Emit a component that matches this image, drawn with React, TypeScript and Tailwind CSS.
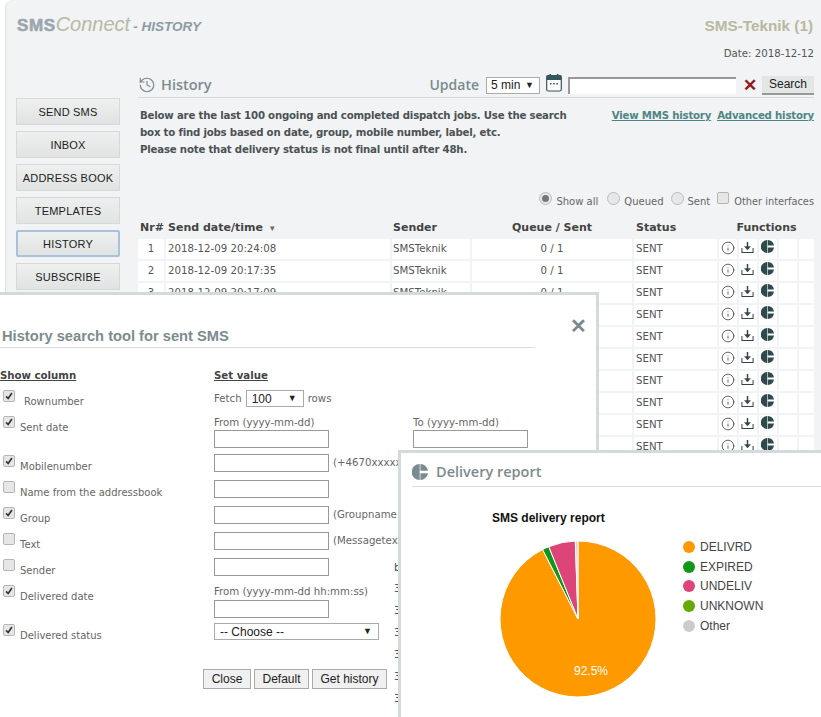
import React from "react";
import { History, Info } from "lucide-react";

const sans = "font-['DejaVu_Sans',sans-serif]";
const arial = "font-['Liberation_Sans',Arial,sans-serif]";
const open = "font-['Open_Sans',sans-serif]";

function PieIcon({ className }: { className?: string }) {
  return (
    <svg viewBox="0 0 16 16" className={className} fill="currentColor">
      <path d="M7.7 0 A8 8 0 0 0 7.7 16 Z" />
      <path d="M8.4 0 A8 8 0 0 1 16 6.7 L8.4 6.7 Z" />
      <path d="M8.4 9.3 L16 9.3 A8 8 0 0 1 8.4 16 Z" />
    </svg>
  );
}

function TrayIcon() {
  return (
    <svg viewBox="0 0 14 14" className="w-[13px] h-[13px] text-[#35474a]" fill="none" stroke="currentColor">
      <path d="M1 7.5 V12.5 H13 V7.5" strokeWidth="1.1" />
      <path d="M7 1 V8.5" strokeWidth="1.6" />
      <path d="M3.8 6 L7 9.7 L10.2 6 Z" fill="currentColor" strokeWidth="0.5" />
    </svg>
  );
}

function Calendar() {
  return (
    <svg viewBox="0 0 16 18" className="w-[16px] h-[18px]">
      <rect x="0.7" y="1.5" width="14.6" height="15.5" rx="1.5" fill="#fff" stroke="#35565a" strokeWidth="1.2" />
      <rect x="0.7" y="1.5" width="14.6" height="4.5" fill="#35565a" />
      <rect x="3.5" y="0" width="1.6" height="2" fill="#35565a" />
      <rect x="10.9" y="0" width="1.6" height="2" fill="#35565a" />
      <rect x="4" y="9" width="1.5" height="1.5" fill="#35565a" />
      <rect x="7.2" y="9" width="1.5" height="1.5" fill="#35565a" />
      <rect x="10.4" y="9" width="1.5" height="1.5" fill="#35565a" />
    </svg>
  );
}

function Caret() {
  return <span className="text-[9px] leading-none text-[#222]">▼</span>;
}

function Check({ on }: { on?: boolean }) {
  return (
    <span className="flex w-[12px] h-[12px] items-center justify-center rounded-[2px] border border-[#b5b5b5] bg-[#e6e6e6]">
      {on && (
        <svg viewBox="0 0 12 12" className="w-[10px] h-[10px]" fill="none" stroke="#333" strokeWidth="2">
          <path d="M2.5 6.5 L5 9 L9.5 2.5" />
        </svg>
      )}
    </span>
  );
}

function Radio({ on }: { on?: boolean }) {
  return (
    <span className="flex w-[13px] h-[13px] items-center justify-center rounded-full border border-[#b9bdbd] bg-[#e6e8e8]">
      {on && <span className="w-[7px] h-[7px] rounded-full bg-[#777]" />}
    </span>
  );
}

const nav = ["SEND SMS", "INBOX", "ADDRESS BOOK", "TEMPLATES", "HISTORY", "SUBSCRIBE"];
const rows = [
  "2018-12-09 20:24:08",
  "2018-12-09 20:17:35",
  "2018-12-09 20:17:09",
  "", "", "", "", "", "", "",
];

function Input({ className = "w-[115px]" }: { className?: string }) {
  return <div className={`h-[18px] border border-[#999] bg-white ${className}`} />;
}

const formRows: { label: string; on: boolean; hint?: string }[] = [
  { label: "Mobilenumber", on: true, hint: "(+4670xxxxxxx)" },
  { label: "Name from the addressbook", on: false },
  { label: "Group", on: true, hint: "(Groupname or part of it)" },
  { label: "Text", on: false, hint: "(Messagetext or part of it)" },
  { label: "Sender", on: false },
];

function CheckLabel({ label, on }: { label: string; on: boolean }) {
  return (
    <div className="flex w-[214px] shrink-0 pl-[3px] gap-[5px]">
      <span className="pt-[1px]"><Check on={on} /></span>
      <span className="pt-[6px] text-[10px] leading-[14px]">{label}</span>
    </div>
  );
}

function HistoryDialog() {
  return (
    <div className={`absolute left-0 top-[292px] bottom-0 w-[599px] border-t-[3px] border-r-[3px] border-[#d3dada] bg-white text-[10.2px] text-[#666] ${sans}`}>
      <div className="relative">
        <h2 className={`pt-[33px] pl-[2px] h-[53px] w-[535px] border-b border-[#d9dddd] text-[14.7px] leading-[17px] font-bold text-[#7d8b8f] ${arial}`}>
          History search tool for sent SMS
        </h2>
        <span className={`absolute left-[570px] top-[21px] text-[20px] leading-[20px] font-bold text-[#7b888c] ${arial}`}>✕</span>
      </div>
      <div className="flex pt-[21px] h-[41px] font-bold text-[#444] text-[10.2px] leading-[14px] underline">
        <span className="w-[214px]">Show column</span>
        <span>Set value</span>
      </div>
      <div className="flex h-[26px]">
        <div className="flex w-[214px] shrink-0 pl-[3px] gap-[9px]">
          <span className="pt-[1px]"><Check on /></span>
          <span className="pt-[6px] text-[10px] leading-[14px]">Rownumber</span>
        </div>
        <div className="flex items-center gap-[4px] self-start pt-[1px]">
          <span>Fetch</span>
          <div className={`flex h-[17px] w-[58px] items-center justify-between border border-[#aaa] pl-[5px] pr-[6px] text-[12px] text-[#222] ${arial}`}>
            100 <Caret />
          </div>
          <span>rows</span>
        </div>
      </div>
      <div className="flex h-[39px]">
        <CheckLabel label="Sent date" on />
        <div className="flex gap-[84px]">
          <div className="flex flex-col">
            <span className="h-[15px] pt-[2px] leading-[12px]">From (yyyy-mm-dd)</span>
            <Input />
          </div>
          <div className="flex flex-col">
            <span className="h-[15px] pt-[2px] leading-[12px]">To (yyyy-mm-dd)</span>
            <Input />
          </div>
        </div>
      </div>
      {formRows.map((r) => (
        <div key={r.label} className="flex h-[26px]">
          <CheckLabel label={r.label} on={r.on} />
          <Input />
          {r.hint && <span className="pl-[4px] pt-[2px] leading-[14px] whitespace-nowrap">{r.hint}</span>}
        </div>
      ))}
      <div className="flex h-[39px]">
        <CheckLabel label="Delivered date" on />
        <div className="flex flex-col mt-[1px]">
          <span className="h-[15px] pt-[1px] leading-[12px]">From (yyyy-mm-dd hh:mm:ss)</span>
          <Input />
        </div>
      </div>
      <div className="flex h-[26px]">
        <CheckLabel label="Delivered status" on />
        <div className={`flex h-[17px] w-[165px] items-center justify-between border border-[#aaa] pl-[5px] pr-[6px] text-[12px] text-[#222] ${arial}`}>
          -- Choose -- <Caret />
        </div>
      </div>
      <div className={`flex gap-[3px] pl-[203px] pt-[20px] text-[12px] text-[#222] ${arial}`}>
        <span className="flex h-[20px] w-[48px] items-center justify-center border border-[#aaa] bg-[#f0f0f0]">Close</span>
        <span className="flex h-[20px] w-[55px] items-center justify-center border border-[#aaa] bg-[#f0f0f0]">Default</span>
        <span className="flex h-[20px] w-[75px] items-center justify-center border border-[#aaa] bg-[#f0f0f0]">Get history</span>
      </div>
      <div className="absolute left-[394px] top-[262px] flex flex-col text-[10.5px] leading-[22px] text-[#555]">
        <span className="h-[20px] leading-[20px] text-[#35565a]">b</span>
        <span>3</span><span>3</span><span>3</span><span>3</span><span>3</span><span>3</span>
      </div>
    </div>
  );
}

function DeliveryDialog() {
  const legend = [
    ["DELIVRD", "bg-[#ff9900]"],
    ["EXPIRED", "bg-[#109618]"],
    ["UNDELIV", "bg-[#dd4477]"],
    ["UNKNOWN", "bg-[#66aa00]"],
    ["Other", "bg-[#cccccc]"],
  ];
  return (
    <div className="absolute left-[398px] top-[450px] right-0 bottom-0 border-l-[3px] border-t-[3px] border-[#d3dada] bg-white">
      <div className="ml-[11px] flex h-[34px] items-center gap-[8px] border-b border-[#dcdfdf] pt-[5px] text-[#7d8b8f]">
        <PieIcon className="w-[16px] h-[16px] text-[#7a8b90]" />
        <span className={`text-[14.5px] font-semibold leading-[20px] ${open}`}>Delivery report</span>
      </div>
      <div className={`pl-[91px] pt-[24px] text-[12px] leading-[14px] font-bold text-[#111] ${arial}`}>SMS delivery report</div>
      <div className="flex pl-[98px] pt-[15px]">
        <svg viewBox="0 0 158 158" className="w-[158px] h-[158px] shrink-0">
          <g transform="translate(-499 -540)" stroke="#fff" strokeWidth="1">
            <path d="M578 619 L578 541 A78 78 0 1 1 542.6 549.5 Z" fill="#ff9900" />
            <path d="M578 619 L542.6 549.5 A78 78 0 0 1 548.8 546.7 Z" fill="#109618" />
            <path d="M578 619 L548.8 546.7 A78 78 0 0 1 575.3 541 Z" fill="#dd4477" />
            <path d="M578 619 L575.3 541 A78 78 0 0 1 578 541 Z" fill="#f3c6d2" />
            <text x="574" y="675" fill="#fff" stroke="none" fontSize="12" fontFamily="Liberation Sans">92.5%</text>
          </g>
        </svg>
        <div className={`ml-[26px] -mt-[3px] flex flex-col text-[12px] text-[#444] ${arial}`}>
          {legend.map(([t, c]) => (
            <div key={t} className="flex h-[19.8px] items-center gap-[5px]">
              <span className={`w-[12px] h-[12px] rounded-full ${c}`} />
              <span>{t}</span>
            </div>
          ))}
        </div>
      </div>
    </div>
  );
}

export default function App() {
  return (
    <div className={`relative w-[821px] h-[717px] overflow-hidden bg-white ${sans}`}>
      <div className="ml-[5px] h-full rounded-tl-[8px] border-l border-[#dfe2e2] bg-[#f1f3f4] pr-[7px]">
        <header className="flex items-start justify-between pl-[11px] pt-[12px] h-[38px]">
          <div className={`flex items-baseline whitespace-nowrap ${arial}`}>
            <span className="text-[17px] leading-[24px] font-black tracking-[0.6px] text-[#9aa7ae] [-webkit-text-stroke:0.6px_#9aa7ae]">SMS</span>
            <span className="text-[20px] leading-[24px] italic text-[#b9b9a6]">Connect</span>
            <span className="ml-[3px] text-[13.5px] leading-[24px] italic font-bold text-[#8f9ba4]">- HISTORY</span>
          </div>
          <span className={`pt-[4px] pr-[1px] text-[15.3px] leading-[20px] font-bold text-[#b9b99f] ${arial}`}>SMS-Teknik (1)</span>
        </header>
        <div className="flex h-[35px] justify-end pt-[9px] text-[10.2px] leading-[14px] text-[#555]">Date: 2018-12-12</div>
        <div className="flex">
          <nav className="flex w-[132px] shrink-0 flex-col gap-[6px] pl-[10px] pt-[25px]">
            {nav.map((n) => (
              <div
                key={n}
                className={`flex h-[27px] w-[104px] items-center justify-center bg-gradient-to-b from-[#eef0ef] to-[#dfe3e1] pt-[1px] text-[11px] tracking-[0.2px] whitespace-nowrap text-[#222] ${arial} ${
                  n === "HISTORY" ? "rounded-[2px] border-2 border-[#a9c1da]" : "border border-[#d6d9d8]"
                }`}
              >
                {n}
              </div>
            ))}
          </nav>
          <main className="flex-1 min-w-0">
            <div className="flex h-[25px] items-center justify-between border-b border-[#d9dcdc]">
              <div className="flex items-center gap-[5px] text-[#7d8b8f]">
                <History className="w-[18px] h-[18px]" strokeWidth={1.6} />
                <span className={`text-[14.5px] font-semibold leading-[20px] ${open}`}>History</span>
              </div>
              <div className="flex items-center">
                <span className={`text-[14px] font-semibold leading-[20px] text-[#7d8b8f] ${open}`}>Update</span>
                <div className={`ml-[7px] flex h-[17px] w-[54px] items-center justify-between border border-[#aaa] bg-white pl-[4px] pr-[5px] text-[12px] text-[#222] ${arial}`}>
                  5 min <Caret />
                </div>
                <span className="ml-[6px] -mt-[4px] flex"><Calendar /></span>
                <div className="ml-[6px] h-[17px] w-[168px] border-l-2 border-t-2 border-[#999] bg-white" />
                <span className={`ml-[7px] w-[13px] text-[17px] leading-[17px] font-bold text-[#8e1c1c] ${arial}`}>✕</span>
                <span className={`ml-[6px] flex h-[19px] w-[52px] items-center justify-center border-b-2 border-[#999] bg-[#e4e6e6] text-[12px] text-[#222] ${arial}`}>Search</span>
              </div>
            </div>
            <div className="flex justify-between pt-[9px] pl-[2px] text-[10.2px] tracking-[-0.2px] leading-[17px] font-bold text-[#4c5254]">
              <p className="whitespace-nowrap">
                Below are the last 100 ongoing and completed dispatch jobs. Use the search
                <br />box to find jobs based on date, group, mobile number, label, etc.
                <br />Please note that delivery status is not final until after 48h.
              </p>
              <div className="flex gap-[6px] whitespace-nowrap text-[#4f8585] underline">
                <span>View MMS history</span>
                <span>Advanced history</span>
              </div>
            </div>
            <div className="flex h-[51px] items-end justify-end gap-[7px] text-[10px] text-[#666]">
              <span className="mr-[2px] flex items-start gap-[4px]"><Radio on /><span className="pt-[3px] leading-[14px]">Show all</span></span>
              <span className="flex items-start gap-[4px]"><Radio /><span className="pt-[3px] leading-[14px]">Queued</span></span>
              <span className="flex items-start gap-[4px]"><Radio /><span className="pt-[3px] leading-[14px]">Sent</span></span>
              <span className="flex items-start gap-[5px]"><Check /><span className="pt-[3px] leading-[14px] text-[9.8px]">Other interfaces</span></span>
            </div>
            <div className="mt-[11px] flex h-[16px] gap-[2px] text-[11px] font-bold leading-[16px] text-[#444]">
              <span className="w-[26px] pl-[2px] whitespace-nowrap">Nr#</span>
              <span className="flex w-[224px] items-center gap-[7px] pl-[2px]">Send date/time <span className="text-[9px] font-normal text-[#666]">▾</span></span>
              <span className="w-[78px] pl-[1px]">Sender</span>
              <span className="w-[160px] text-center">Queue / Sent</span>
              <span className="w-[83px] pl-[2px]">Status</span>
              <span className="w-[95px] text-center">Functions</span>
            </div>
            <div className="mt-[3px] flex flex-col gap-[2px] text-[10.2px] text-[#555]">
              {rows.map((d, i) => (
                <div key={i} className="flex h-[20px] gap-[2px] leading-[20px]">
                  <span className="w-[26px] bg-white text-center">{d && i + 1}</span>
                  <span className="w-[224px] bg-white pl-[2px]">{d}</span>
                  <span className="w-[78px] bg-white pl-[1px]">{d && "SMSTeknik"}</span>
                  <span className="w-[160px] bg-white text-center">{d && "0 / 1"}</span>
                  <span className="w-[83px] bg-white pl-[2px]">SENT</span>
                  <span className="flex w-[18px] justify-center bg-white pr-[1px]"><Info className="mt-[2px] w-[14px] h-[14px] text-[#444]" strokeWidth={1.4} /></span>
                  <span className="flex w-[18px] justify-center bg-white pt-[2px] pr-[1px]"><TrayIcon /></span>
                  <span className="flex w-[18px] justify-center bg-white pt-[1px] pr-[2px]"><PieIcon className="w-[13px] h-[13px] text-[#2f4a4d]" /></span>
                  <span className="w-[18px] bg-white" />
                  <span className="w-[15px] bg-white" />
                </div>
              ))}
            </div>
          </main>
        </div>
      </div>
      <HistoryDialog />
      <DeliveryDialog />
    </div>
  );
}
